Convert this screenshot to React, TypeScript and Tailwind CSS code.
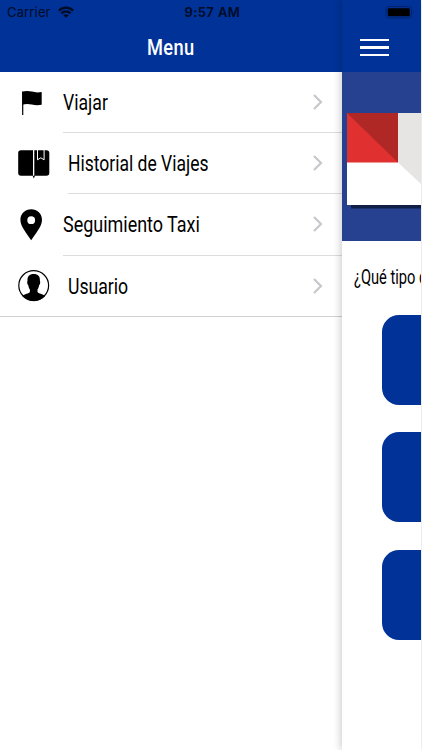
import type { ReactNode } from "react";

const FONT = "font-['Roboto','Liberation_Sans',sans-serif]";

function FlagIcon() {
  return (
    <svg width="32" height="32" viewBox="0 0 32 32" className="block">
      <path d="M4.100 4.400h1.200v23.600H4.100z" />
      <path d="M4.300 4.800c3-1.300 6.500-1 9.500-.2 3.200.9 6.500 1 9.900.4v12.800c-3.400.7-6.700.6-9.900-.2-3-.8-6.500-.9-9.500.2z" />
    </svg>
  );
}

function BookIcon() {
  return (
    <svg width="32" height="32" viewBox="0 0 32 32" className="block">
      <path d="M3 2.200h12V27.800H3a2.800 2.800 0 0 1-2.800-2.800V5A2.800 2.800 0 0 1 3 2.200z" />
      <path d="M16.300 2.200h12.200A2.800 2.800 0 0 1 31.300 5v20a2.800 2.800 0 0 1-2.800 2.800H17l-1.200 2.700-1.200-2.700h1.700z" />
      <path d="M19.500 2v9.800l3.300-2 3.300 2V2" fill="none" stroke="white" strokeWidth="1" />
    </svg>
  );
}

function PinIcon() {
  return (
    <svg width="32" height="32" viewBox="0 0 32 32" className="block">
      <path
        fillRule="evenodd"
        d="M13.200.3C7.100.3 2.400 4.900 2.400 10.700c0 7.300 7 14.100 10.800 20.600C17 24.800 24 18 24 10.700 24 4.900 19.300.3 13.200.3zm0 7a3.900 3.900 0 1 1 0 7.800 3.900 3.900 0 0 1 0-7.800z"
      />
    </svg>
  );
}

function UserIcon() {
  return (
    <svg width="32" height="32" viewBox="0 0 32 32" className="block">
      <circle cx="15.700" cy="15.500" r="14.900" fill="white" stroke="black" strokeWidth="1.200" />
      <path d="M15.700 4c-4.800 0-6.500 2.800-6.200 7-.7.900-.2 3.600.8 4.200.3 2 .8 3.200 1.600 4.200v2.600c-.8 1.700-5.500 1.800-7.600 4a15.200 15.200 0 0 0 22.800 0c-2.100-2.200-6.800-2.300-7.600-4v-2.600c.8-1 1.300-2.200 1.600-4.200 1-.6 1.500-3.300.8-4.200.3-4.200-1.400-7-6.200-7z" />
    </svg>
  );
}

type ItemProps = {
  icon: ReactNode;
  label: string;
  inset: string;
  scale: string;
  last?: boolean;
};

function MenuItem({ icon, label, inset, scale, last }: ItemProps) {
  return (
    <li className={`flex h-[61.200px] pl-[18px] ${last ? "border-b border-[#d0d0d2]" : ""}`}>
      <div className={`flex shrink-0 items-center ${inset}`}>{icon}</div>
      <div
        className={`flex min-w-0 flex-1 items-center justify-between pr-[18px] ${last ? "" : "border-b border-[#dcdcde]"}`}
      >
        <span className={`mt-[2px] origin-left text-[21.500px] leading-7 whitespace-nowrap ${scale}`}>{label}</span>
        <svg width="12" height="16" viewBox="0 0 12 16" className="shrink-0">
          <path d="M2 1l7 7-7 7" fill="none" stroke="#c7c7cc" strokeWidth="2.200" />
        </svg>
      </div>
    </li>
  );
}

function StatusBar() {
  return (
    <div className="absolute inset-x-0 top-0 z-20 flex h-6 w-[421px] items-center font-['Inter','Liberation_Sans',sans-serif] text-[#000b24]">
      <div className="flex w-[184.500px] items-center gap-[7px] pl-[7px]">
        <span className="text-[13px] leading-6 tracking-[0.150px]">Carrier</span>
        <svg width="16" height="12" viewBox="0 0 16 12" fill="none" stroke="currentColor" strokeWidth="2.300">
          <path d="M.9 4.600c4.100-4 10.100-4 14.200 0M3.400 7.400c2.700-2.600 6.500-2.600 9.200 0" />
          <path d="M5.300 9.200c1.600-1.400 3.800-1.400 5.400 0L8 11.800z" fill="currentColor" stroke="none" />
        </svg>
      </div>
      <span className="text-[13px] leading-6 font-semibold tracking-[0.400px] whitespace-nowrap">9:57 AM</span>
      <svg width="30" height="14" viewBox="0 0 30 14" className="mr-[6px] ml-auto">
        <rect x="1" y="1.500" width="25.500" height="11.500" rx="3" fill="none" stroke="#00206c" />
        <rect x="2.800" y="3.300" width="22" height="8" rx="1.300" fill="black" />
        <path d="M28 5.500q1.600 1.700 0 3.500z" fill="#001a60" />
      </svg>
    </div>
  );
}

function TaxiBanner() {
  return (
    <div className="flex h-[168.500px] items-start bg-[#26418f] pt-[40.500px] pl-[5px]">
      <svg width="75" height="97" viewBox="0 0 75 97" className="block shrink-0">
        <path d="M4 90h71v5.500H4z" fill="#111e46" />
        <path d="M0 0h75v92H0z" fill="white" />
        <path d="M0 0h51v49.500H0z" fill="#e03030" />
        <path d="M0 0h51v49.500z" fill="#af2826" />
        <path d="M51 0h24v72L51 49.500z" fill="#e7e4e4" />
      </svg>
    </div>
  );
}

export default function App() {
  return (
    <div className={`relative flex h-[750px] w-[422px] overflow-hidden bg-white text-black ${FONT}`}>
      <StatusBar />
      <aside className="w-[341.500px] shrink-0">
        <header className="flex h-[72px] items-end justify-center bg-[#003297] pb-[10px] text-white">
          <span className="scale-x-[0.830] text-[22px] leading-7 font-medium tracking-[0.500px]">Menu</span>
        </header>
        <ul>
          <MenuItem icon={<FlagIcon />} label="Viajar" inset="w-[45px]" scale="scale-x-[0.820]" />
          <MenuItem icon={<BookIcon />} label="Historial de Viajes" inset="w-[49.500px]" scale="scale-x-[0.814]" />
          <MenuItem icon={<PinIcon />} label="Seguimiento Taxi" inset="w-[45px]" scale="scale-x-[0.835]" />
          <MenuItem icon={<UserIcon />} label="Usuario" inset="w-[49.500px]" scale="scale-x-[0.820]" last />
        </ul>
      </aside>
      <main className="z-10 w-[79.500px] shrink-0 bg-white shadow-[-1px_0_8px_rgba(0,0,0,0.220)]">
        <div className="h-[750px] overflow-hidden">
          <header className="flex h-[72px] items-start bg-[#003297] pt-[39px] pl-[18px]">
            <div className="flex w-[29px] flex-col gap-[5px]">
              <i className="h-[2.300px] bg-white" />
              <i className="h-[2.300px] bg-white" />
              <i className="h-[2.300px] bg-white" />
            </div>
          </header>
          <TaxiBanner />
          <p className="mt-[22px] ml-[12px] origin-left scale-x-[0.715] text-[20.500px] leading-7 whitespace-nowrap">
            ¿Qué tipo de servicio?
          </p>
          <div className="mt-[24.300px] ml-[40.500px] flex w-[300px] flex-col gap-[27.500px]">
            <div className="h-[90px] rounded-[17px] bg-[#003297]" />
            <div className="h-[90px] rounded-[17px] bg-[#003297]" />
            <div className="h-[90px] rounded-[17px] bg-[#003297]" />
          </div>
        </div>
      </main>
    </div>
  );
}
